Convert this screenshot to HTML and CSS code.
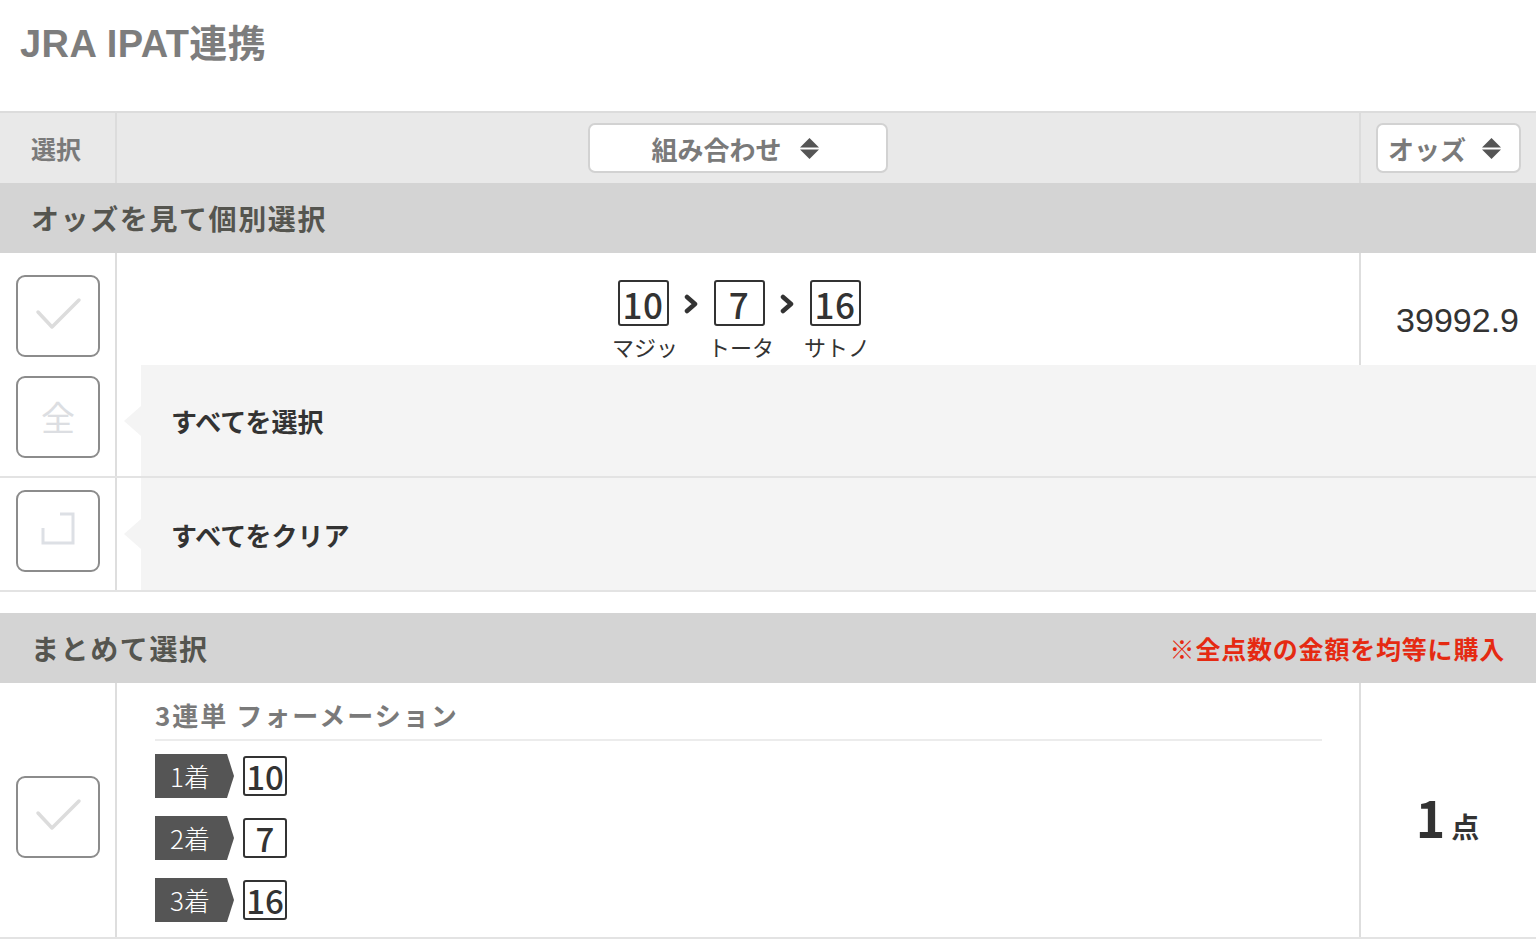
FILE: index.html
```html
<!DOCTYPE html>
<html lang="ja">
<head>
<meta charset="utf-8">
<title>JRA IPAT連携</title>
<link rel="stylesheet" href="styles.css">
</head>
<body>
<div class="page">
  <header class="title-bar">
    <h1 class="title">JRA IPAT連携</h1>
  </header>

  <div class="grid thead">
    <div class="th th-sel">選択</div>
    <div class="th th-combo">
      <button class="sort sort-combo">組み合わせ
        <svg class="sort-icon" viewBox="0 0 19 21" width="19" height="21"><polygon points="9.5,0 19,9.5 0,9.5"/><polygon points="0,11.5 19,11.5 9.5,21"/></svg>
      </button>
    </div>
    <div class="th th-odds">
      <button class="sort sort-odds">オッズ
        <svg class="sort-icon" viewBox="0 0 19 21" width="19" height="21"><polygon points="9.5,0 19,9.5 0,9.5"/><polygon points="0,11.5 19,11.5 9.5,21"/></svg>
      </button>
    </div>
  </div>

  <div class="section-head">
    <span class="section-title">オッズを見て個別選択</span>
  </div>

  <div class="grid row-bet">
    <div class="cell-check pt-bet">
      <span class="checkbox">
        <svg viewBox="0 0 84 82" width="84" height="82"><polyline points="22,37 36,52 63,25" class="check-line"/></svg>
      </span>
    </div>
    <div class="cell-combo">
      <div class="combo">
        <div class="horse"><span class="num">10</span><span class="name">マジッ</span></div>
        <svg class="chev" viewBox="0 0 14 20" width="14" height="20"><polyline points="3,3 11,10 3,17"/></svg>
        <div class="horse"><span class="num">7</span><span class="name">トータ</span></div>
        <svg class="chev" viewBox="0 0 14 20" width="14" height="20"><polyline points="3,3 11,10 3,17"/></svg>
        <div class="horse"><span class="num">16</span><span class="name">サトノ</span></div>
      </div>
    </div>
    <div class="cell-odds">39992.9</div>
  </div>

  <div class="grid2 row-action">
    <div class="cell-check pt-all">
      <span class="checkbox"><span class="all-glyph">全</span></span>
    </div>
    <div class="cell-action">
      <div class="action-panel">すべてを選択</div>
    </div>
  </div>

  <div class="grid2 row-action row-clear">
    <div class="cell-check pt-clear">
      <span class="checkbox">
        <svg viewBox="0 0 84 82" width="84" height="82"><path d="M27,38 V53 H57 V24 H44" class="clear-line"/></svg>
      </span>
    </div>
    <div class="cell-action">
      <div class="action-panel">すべてをクリア</div>
    </div>
  </div>

  <div class="spacer"></div>

  <div class="section-head">
    <span class="section-title">まとめて選択</span>
    <span class="section-note">※全点数の金額を均等に購入</span>
  </div>

  <div class="grid row-form">
    <div class="cell-check pt-form">
      <span class="checkbox">
        <svg viewBox="0 0 84 82" width="84" height="82"><polyline points="22,37 36,52 63,25" class="check-line"/></svg>
      </span>
    </div>
    <div class="cell-form">
      <div class="form-title">3連単 フォーメーション</div>
      <div class="place-list">
        <div class="place"><span class="place-label">1着</span><span class="pnum">10</span></div>
        <div class="place"><span class="place-label">2着</span><span class="pnum">7</span></div>
        <div class="place"><span class="place-label">3着</span><span class="pnum">16</span></div>
      </div>
    </div>
    <div class="cell-count"><span class="count-num">1</span><span class="count-unit">点</span></div>
  </div>
</div>
</body>
</html>
```

FILE: styles.css
```css
* { box-sizing: border-box; }
html, body { margin: 0; padding: 0; background: #fff; }
body {
  font-family: "Liberation Sans", "Noto Sans CJK JP", sans-serif;
  color: #333;
}
.page { width: 1536px; }

.title-bar { height: 111px; padding: 25px 0 0 20px; }
.title {
  margin: 0;
  font-size: 38px;
  line-height: 38px;
  font-weight: 700;
  color: #7d7d7d;
  letter-spacing: 0.4px;
}

.grid { display: grid; grid-template-columns: 117px 1fr 177px; }
.grid2 { display: grid; grid-template-columns: 117px 1fr; }

.thead {
  height: 72px;
  border-top: 2px solid #dcdcdc;
  background: #e9e9e9;
}
.th { display: flex; align-items: center; }
.th-sel {
  border-right: 2px solid #dcdcdc;
  padding-left: 31px;
  font-family: "Noto Sans CJK JP", sans-serif;
  font-size: 25px;
  font-weight: 700;
  color: #7a7a7a;
}
.th-combo { justify-content: center; }
.th-odds { border-left: 2px solid #dcdcdc; justify-content: center; }
.sort {
  height: 50px;
  display: flex;
  align-items: center;
  gap: 18px;
  background: #fff;
  border: 2px solid #d2d2d2;
  border-radius: 7px;
  font-family: "Noto Sans CJK JP", sans-serif;
  font-size: 26px;
  font-weight: 700;
  color: #7a7a7a;
  cursor: pointer;
}
.sort-combo { width: 300px; justify-content: center; padding: 0 6px 0 0; }
.sort-odds { width: 145px; padding: 0 0 0 10px; gap: 16px; }
.sort-icon { fill: #555; flex: none; }

.section-head {
  height: 70px;
  background: #d4d4d4;
  display: flex;
  align-items: center;
  justify-content: space-between;
  padding: 0 31px;
}
.section-title {
  font-family: "Noto Sans CJK JP", sans-serif;
  font-size: 28px;
  font-weight: 700;
  letter-spacing: 1.6px;
  color: #55554f;
}
.section-note {
  font-family: "Noto Sans CJK JP", sans-serif;
  font-size: 25px;
  font-weight: 700;
  letter-spacing: 0.8px;
  color: #e52a12;
}

.cell-check {
  border-right: 2px solid #dedede;
  padding-left: 16px;
}
.pt-bet { padding-top: 22px; }
.pt-all { padding-top: 11px; }
.pt-clear { padding-top: 12px; }
.pt-form { padding-top: 93px; }

.checkbox {
  width: 84px;
  height: 82px;
  border: 2px solid #8c8c8c;
  border-radius: 9px;
  display: flex;
  align-items: center;
  justify-content: center;
  background: #fff;
  position: relative;
}
.checkbox svg { position: absolute; left: -2px; top: -2px; }
.check-line, .clear-line {
  fill: none;
  stroke: #dcdcdc;
  stroke-width: 3.5;
}
.check-line { stroke-linecap: round; stroke-linejoin: round; }
.clear-line { stroke: #dde0e5; stroke-width: 3; }
.all-glyph {
  font-family: "Noto Sans CJK JP", sans-serif;
  font-size: 34px;
  font-weight: 400;
  color: #dcdee2;
  line-height: 1;
}

.row-bet { height: 112px; }
.cell-combo { padding-top: 27px; }
.combo { display: flex; justify-content: center; align-items: flex-start; gap: 8px; padding-left: 2px; }
.horse { width: 66px; display: flex; flex-direction: column; align-items: center; }
.num {
  width: 51px;
  height: 46px;
  border: 2px solid #333;
  border-radius: 3px;
  display: flex;
  align-items: center;
  justify-content: center;
  font-family: "Noto Sans CJK JP", sans-serif;
  font-size: 35px;
  font-weight: 500;
  color: #333;
  line-height: 1;
  letter-spacing: 0.5px;
}
.name {
  margin-top: 6px;
  font-family: "Noto Sans CJK JP", sans-serif;
  font-size: 22px;
  line-height: 28px;
  color: #333;
  white-space: nowrap;
  padding-left: 4px;
}
.chev { margin-top: 14px; flex: none; }
.chev polyline { fill: none; stroke: #333; stroke-width: 4.5; stroke-linecap: round; stroke-linejoin: round; }
.cell-odds {
  border-left: 2px solid #dedede;
  padding: 47px 17px 0 0;
  text-align: right;
  font-family: "Liberation Sans", sans-serif;
  font-size: 34px;
  line-height: 40px;
  color: #333;
}

.row-action { height: 113px; border-bottom: 2px solid #e3e3e3; }
.row-clear { height: 114px; }
.cell-action { padding-left: 24px; }
.action-panel {
  position: relative;
  height: 100%;
  background: #f4f4f4;
  display: flex;
  align-items: center;
  padding-left: 30px;
  font-family: "Noto Sans CJK JP", sans-serif;
  font-size: 26px;
  font-weight: 700;
  color: #333;
}
.action-panel::before {
  content: "";
  position: absolute;
  left: -17px;
  top: 50%;
  margin-top: -15px;
  border-right: 17px solid #f4f4f4;
  border-top: 15px solid transparent;
  border-bottom: 15px solid transparent;
}

.spacer { height: 21px; }

.row-form { height: 256px; border-bottom: 2px solid #e3e3e3; }
.cell-form { padding: 13px 37px 0 38px; }
.form-title {
  font-family: "Noto Sans CJK JP", sans-serif;
  font-size: 26px;
  font-weight: 700;
  letter-spacing: 2px;
  line-height: 38px;
  color: #7a7a7a;
  padding-bottom: 5px;
  border-bottom: 2px solid #ececec;
}
.place-list { display: flex; flex-direction: column; gap: 18px; margin-top: 13px; }
.place { display: flex; align-items: center; gap: 9px; }
.place-label {
  width: 79px;
  height: 44px;
  background: #555;
  clip-path: polygon(0 0, 72px 0, 79px 50%, 72px 100%, 0 100%);
  color: #fff;
  font-family: "Noto Sans CJK JP", sans-serif;
  font-size: 26px;
  font-weight: 300;
  line-height: 44px;
  padding-left: 15px;
}
.pnum {
  width: 44px;
  height: 40px;
  border: 2px solid #333;
  border-radius: 3px;
  display: flex;
  align-items: center;
  justify-content: center;
  font-family: "Noto Sans CJK JP", sans-serif;
  font-size: 33px;
  font-weight: 500;
  color: #333;
  line-height: 1;
}
.cell-count {
  border-left: 2px solid #dedede;
  display: flex;
  align-items: baseline;
  justify-content: center;
  padding-top: 108px;
  padding-right: 2px;
}
.count-num {
  font-family: "Noto Sans CJK JP", sans-serif;
  font-size: 50px;
  font-weight: 700;
  color: #333;
  line-height: 1;
}
.count-unit {
  font-family: "Noto Sans CJK JP", sans-serif;
  font-size: 28px;
  font-weight: 700;
  color: #333;
  margin-left: 6px;
}
```
